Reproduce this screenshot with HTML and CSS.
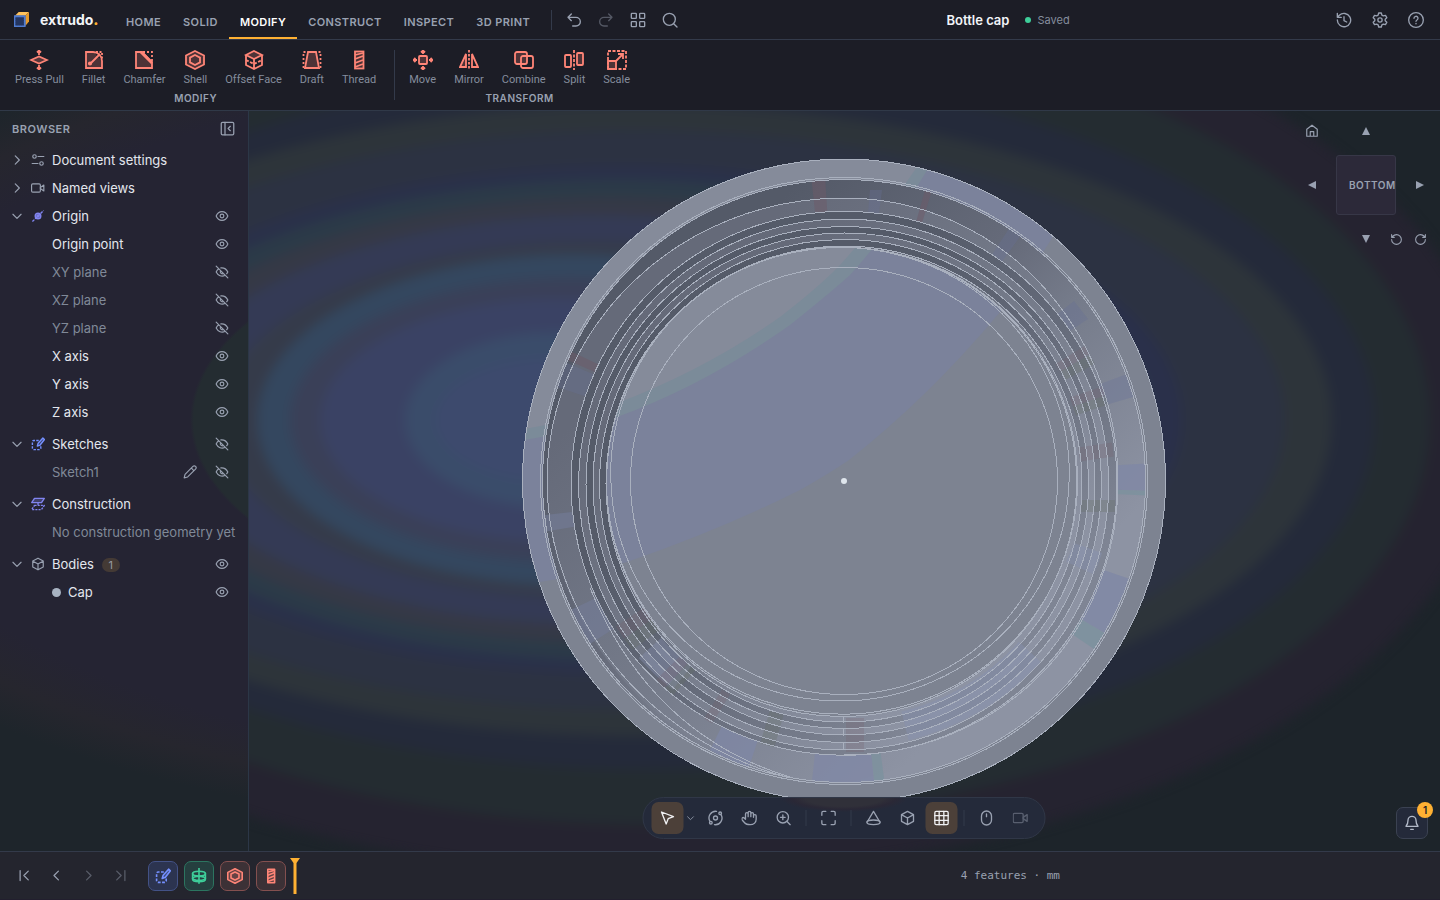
FILE: index.html
```html
<!DOCTYPE html>
<html lang="en">
<head>
<meta charset="utf-8">
<title>Bottle cap – extrudo</title>
<link rel="stylesheet" href="styles.css">
</head>
<body>
<svg class="defs" aria-hidden="true">
  <symbol id="eye" viewBox="0 0 24 24"><path d="M2 12c2-5 6-7.500 10-7.500s8 2.500 10 7.500c-2 5-6 7.500-10 7.500S4 17 2 12z"/><circle cx="12" cy="12" r="3.200"/></symbol>
  <symbol id="eye-off" viewBox="0 0 24 24"><path d="M10 5c5-.6 9.500 2 12 7a14 14 0 0 1-2 3M6.500 6.500A13 13 0 0 0 2 12c3 6 9.500 9 15.500 5.500M9.800 9.800a3.200 3.200 0 0 0 4.500 4.500M2 2l20 20"/></symbol>
  <symbol id="right" viewBox="0 0 24 24"><path d="m9 5 7 7-7 7"/></symbol>
  <symbol id="left" viewBox="0 0 24 24"><path d="m15 5-7 7 7 7"/></symbol>
  <symbol id="down" viewBox="0 0 24 24"><path d="m5 9 7 7 7-7"/></symbol>
  <symbol id="cube" viewBox="0 0 24 24"><path d="M12 2l9 5v10l-9 5-9-5V7zM3.500 7.200 12 12l8.500-4.800M12 12v10"/></symbol>
  <symbol id="video" viewBox="0 0 24 24"><rect x="1" y="5" width="15" height="14" rx="2"/><path d="m16 11 6-4v10l-6-4"/></symbol>
  <symbol id="sketch" viewBox="0 0 20 20"><path stroke-linecap="butt" stroke-dasharray="3.500 1.800" d="M11 5H4a2 2 0 0 0-2 2v9a2 2 0 0 0 2 2h8a2 2 0 0 0 2-2v-3"/><path fill="currentColor" fill-opacity=".25" d="m9 13 1.200-4L17 1.500 19.200 3.500 13 11.500z"/></symbol>
  <symbol id="shell" viewBox="0 0 20 20"><path fill="currentColor" fill-opacity=".22" d="M10 1l9 4.500v9L10 19l-9-4.500v-9z"/><path d="M10 5l5 2.600v4.800L10 15l-5-2.600V7.600z"/></symbol>
  <symbol id="thread" viewBox="0 0 20 20"><rect fill="currentColor" fill-opacity=".2" x="6" y="1.500" width="8.500" height="17"/><path d="m6 5 8-2M6 9l8-3M6 13l8-3M6 17l8-3"/></symbol>
  <symbol id="ccw" viewBox="0 0 24 24"><path d="M3 12a9 9 0 1 0 9-9 10 10 0 0 0-7 3L3 8M3 3v5h5"/></symbol>
  <symbol id="cw" viewBox="0 0 24 24"><path d="M21 12a9 9 0 1 1-9-9 10 10 0 0 1 7 3l2 2M21 3v5h-5"/></symbol>
</svg>
<div class="app">
  <header class="topbar">
    <a class="brand" href="#">
      <svg class="logo" viewBox="0 0 16 16"><path fill="#ffc25c" d="M1 4 5 0h11l-4 4z"/><path fill="#e59a2c" d="M12 4l4-4v10l-4 5z"/><path fill="#24355f" stroke="#4f7bd0" stroke-dasharray="1 1" d="M.5 4.500h11v11H.5z"/></svg>
      <span>extrudo<b>.</b></span>
    </a>
    <nav class="tabs">
      <button>HOME</button><button>SOLID</button><button class="current">MODIFY</button><button>CONSTRUCT</button><button>INSPECT</button><button>3D PRINT</button>
    </nav>
    <div class="quick">
      <button aria-label="Undo"><svg viewBox="0 0 24 24"><path d="M8 13 3 8l5-5M3 8h12a6 6 0 0 1 0 13h-5"/></svg></button>
      <button aria-label="Redo" class="dim"><svg viewBox="0 0 24 24"><path d="m16 13 5-5-5-5M21 8H9a6 6 0 0 0 0 13h5"/></svg></button>
      <button aria-label="Apps"><svg viewBox="0 0 24 24"><rect x="2" y="2" width="7.500" height="7.500" rx="1"/><rect x="14.500" y="2" width="7.500" height="7.500" rx="1"/><rect x="2" y="14.500" width="7.500" height="7.500" rx="1"/><rect x="14.500" y="14.500" width="7.500" height="7.500" rx="1"/></svg></button>
      <button aria-label="Search"><svg viewBox="0 0 24 24"><circle cx="11" cy="11" r="9"/><path d="m17.500 17.500 5 5"/></svg></button>
    </div>
    <div class="doc"><h1>Bottle cap</h1><span class="saved">Saved</span></div>
    <div class="account">
      <button aria-label="History"><svg viewBox="0 0 24 24"><path d="M2 12a10 10 0 1 0 3-7L2 8M2 2v6h6M12 7v6l4 2"/></svg></button>
      <button aria-label="Settings"><svg viewBox="0 0 24 24"><path d="M10 1.500h4l.8 3.200 2.200 1.200 3.200-.9 2 3.500-2.400 2.300v2.400l2.400 2.300-2 3.500-3.200-.9-2.200 1.200-.8 3.200h-4l-.8-3.200L7 18.100l-3.200.9-2-3.500 2.400-2.300v-2.400L1.800 8.500l2-3.500 3.200.9 2.200-1.200z"/><circle cx="12" cy="12" r="3.200"/></svg></button>
      <button aria-label="Help"><svg viewBox="0 0 24 24"><circle cx="12" cy="12" r="11"/><path d="M9 9.500a3 3 0 1 1 4.500 2.500c-1 .6-1.500 1-1.500 2M12 17v.6"/></svg></button>
    </div>
  </header>

  <section class="ribbon">
    <div class="toolset">
      <div class="tools">
        <button><svg viewBox="0 0 20 20"><path fill="currentColor" fill-opacity=".25" d="m2 10 8-3.500 8 3.500-8 3.500z"/><path d="M10 5V1M8 2.500 10 .5l2 2M10 15v4M8 17.500l2 2 2-2"/></svg>Press Pull</button>
        <button><svg viewBox="0 0 20 20"><path fill="currentColor" fill-opacity=".22" stroke="none" d="M2 2h9c1 4 4 7 7 7v9H2z"/><path d="M9 2H2v16h16v-7M6 14 16 4"/><path stroke-dasharray="2 1.500" d="M12 2h6v7"/><path d="M9 2c5 0 9 4 9 9"/><circle cx="6" cy="13.500" r="1.200" fill="currentColor"/></svg>Fillet</button>
        <button><svg viewBox="0 0 20 20"><path fill="currentColor" fill-opacity=".22" d="M8 2H2v16h16v-6z"/><path stroke-width="3" d="m7 2 11 11"/><path stroke-dasharray="2 2" d="M9 2h9v10"/></svg>Chamfer</button>
        <button><svg><use href="#shell"/></svg>Shell</button>
        <button><svg viewBox="0 0 20 20"><path fill="currentColor" fill-opacity=".22" d="m10 1 8 4-8 4-8-4z"/><path d="M2 5v10l8 4 8-4V5M10 9v10"/><path stroke-dasharray="3 1.500" d="m2 10 8 4 8-4"/></svg>Offset Face</button>
        <button><svg viewBox="0 0 20 20"><path fill="currentColor" fill-opacity=".22" d="M6 2h8l3 16H3z"/><path stroke-dasharray="2 2" d="M1.500 18V2h4M18.500 18V2h-4"/></svg>Draft</button>
        <button><svg><use href="#thread"/></svg>Thread</button>
      </div>
      <h2>MODIFY</h2>
    </div>
    <div class="toolset">
      <div class="tools">
        <button><svg viewBox="0 0 20 20"><rect x="6" y="6" width="8" height="8" rx="1" fill="currentColor" fill-opacity=".22"/><path d="M10 4V1M8 2.500 10 .5l2 2M10 16v3M8 17.500l2 2 2-2M4 10H1M2.500 8l-2 2 2 2M16 10h3M17.500 8l2 2-2 2"/></svg>Move</button>
        <button><svg viewBox="0 0 20 20"><path fill="currentColor" fill-opacity=".22" d="M7 4v13H1z"/><path d="M13 4v13h6z"/><path stroke-dasharray="2.500 1.500" d="M10 0v20"/></svg>Mirror</button>
        <button><svg viewBox="0 0 20 20"><rect x="1" y="2" width="12" height="12" rx="2" fill="currentColor" fill-opacity=".22"/><rect x="7" y="6" width="12" height="12" rx="2"/></svg>Combine</button>
        <button><svg viewBox="0 0 20 20"><rect x="1" y="5" width="6" height="12" rx="1"/><rect x="13" y="3" width="6" height="12" rx="1" fill="currentColor" fill-opacity=".22"/><path stroke-dasharray="3 1.500" d="M10 0v20"/></svg>Split</button>
        <button><svg viewBox="0 0 20 20"><rect x="1" y="1" width="18" height="18" stroke-dasharray="3 1.500"/><path fill="currentColor" fill-opacity=".22" d="M1 11h8v8H1z"/><path d="m9 11 7-7M11 4h5v5"/></svg>Scale</button>
      </div>
      <h2>TRANSFORM</h2>
    </div>
  </section>

  <main class="stage">
    <svg class="scene" viewBox="0 111 1440 740" preserveAspectRatio="xMidYMid slice">
      <defs>
        <filter id="soft" x="-10%" y="-10%" width="120%" height="120%" color-interpolation-filters="sRGB"><feGaussianBlur stdDeviation="6"/></filter>
        <linearGradient id="dark" x1=".15" y1=".15" x2=".8" y2=".8"><stop offset=".3" stop-color="#555b69"/><stop offset=".6" stop-color="#646a79"/><stop offset="1" stop-color="#7f8594"/></linearGradient>
        <linearGradient id="light" x1=".15" y1=".15" x2=".8" y2=".8"><stop offset=".1" stop-color="#656a79"/><stop offset=".55" stop-color="#757b8a"/><stop offset="1" stop-color="#8d93a3"/></linearGradient>
        <linearGradient id="wall" x1=".15" y1=".15" x2=".8" y2=".8"><stop offset=".1" stop-color="#545a68"/><stop offset=".45" stop-color="#666b7a"/><stop offset=".6" stop-color="#757b8a"/><stop offset=".95" stop-color="#8d93a3"/></linearGradient>
        <clipPath id="rimClip"><circle cx="844" cy="480.500" r="321.500"/></clipPath>
        <clipPath id="wallClip"><circle cx="844" cy="481" r="302"/></clipPath>
        <clipPath id="floorClip"><ellipse cx="841.600" cy="482" rx="235" ry="234.500"/></clipPath>
        <g id="sheen">
          <rect x="500" y="150" width="700" height="670" fill="#7d8391"/>
          <path fill="#7b829b" d="M500 140V588Q535 583 570 577 600 570 627 562 720 530 800 490 830 473 849 460 930 396 1000 312 1030 275 1060 225L1100 140z"/>
          <path fill="#7b8b99" d="M500 140V443Q570 435 617 417 705 385 790 325 830 293 850 275 900 220 945 140z"/>
          <path fill="#858b9a" d="M500 140V433Q565 424 615 404 705 370 780 317 820 286 840 265 890 210 935 140z"/>
        </g>
      </defs>
      <rect y="60" width="1440" height="840" fill="#1d242a"/>
      <g filter="url(#soft)">
        <ellipse cx="660" cy="420" rx="835" ry="455" fill="#252330"/>
        <ellipse cx="660" cy="420" rx="770" ry="405" fill="#242c31"/>
        <ellipse cx="655" cy="420" rx="720" ry="350" fill="#242a3a"/>
        <ellipse cx="640" cy="420" rx="692" ry="316" fill="#2d343a"/>
        <ellipse cx="635" cy="420" rx="650" ry="290" fill="#2c3242"/>
        <ellipse cx="622" cy="420" rx="560" ry="254" fill="#2a304a"/>
        <ellipse cx="620" cy="420" rx="532" ry="241" fill="#2b3a48"/>
        <ellipse cx="610" cy="420" rx="490" ry="223" fill="#353946"/>
        <ellipse cx="600" cy="420" rx="440" ry="205" fill="#343a55"/>
        <ellipse cx="590" cy="420" rx="370" ry="178" fill="#353b4a"/>
        <ellipse cx="575" cy="420" rx="318" ry="166" fill="#34475f"/>
        <ellipse cx="570" cy="420" rx="280" ry="142" fill="#3a4058"/>
        <ellipse cx="560" cy="420" rx="240" ry="122" fill="#3a4264"/>
        <ellipse cx="555" cy="420" rx="150" ry="88" fill="#3a4c6a"/>
        <ellipse cx="550" cy="420" rx="115" ry="62" fill="#3d4a6d"/>
      </g>
      <g clip-path="url(#rimClip)"><use href="#sheen"/></g>
      <g clip-path="url(#wallClip)">
        <circle cx="844" cy="481" r="302" fill="url(#wall)"/>
        <path fill="url(#light)" d="M547 481C547 325 680 198 844 198c155 0 274 130 274 283 0 160-124 274-274 302C680 783 547 640 547 481z"/>
        <path fill="#7f87a5" fill-opacity=".75" d="M844 481 810 800h66zM844 481l310-18v28zM844 481l286 98-22 56zM844 481 710 750l38 20z"/>
        <path fill="#737b98" fill-opacity=".6" d="M844 481 520 518v18zM844 481 560 615l22 34zM844 481l296-112v26z"/>
        <path fill="#7b929e" fill-opacity=".75" d="M844 481 876 800h11zM844 481l310 10v5zM844 481l264 154-8 18z"/>
        <path fill="#687094" fill-opacity=".35" d="M844 481 560 360l-6 26zM844 481l230-180 14 18zM844 481l170-260 10 10zM844 481 870 190h12z"/>
        <path fill="#6e5a68" fill-opacity=".5" d="M844 481 811 175h14zM844 481 925 190h7zM844 481 568 350l-3 9z"/>
      </g>
      <g>
        <ellipse cx="844" cy="483.300" rx="273" ry="272" fill="url(#dark)"/>
        <ellipse cx="843.700" cy="484.500" rx="265" ry="265.500" fill="url(#light)"/>
        <ellipse cx="843.700" cy="484.500" rx="257.700" ry="258" fill="url(#dark)"/>
        <ellipse cx="844" cy="484" rx="251" ry="251" fill="url(#light)"/>
        <ellipse cx="844" cy="484" rx="244.500" ry="244.500" fill="url(#dark)"/>
        <ellipse cx="844" cy="484" rx="238" ry="238" fill="url(#light)"/>
      </g>
      <path fill="none" stroke="#8791b2" stroke-opacity=".4" stroke-width="30" d="M905 726A252 252 0 0 0 1030 652M1080 568a252 252 0 0 0 8-20M650 648a252 252 0 0 0 32 30"/>
      <path fill="none" stroke="#77616d" stroke-opacity=".25" stroke-width="34" d="M630 617l8 12M668 668l8 8M713 704l8 5M1070 355l5 8M1086 392l3 9M1095 445l2 14M846 735h18"/>
      <path fill="none" stroke="#687266" stroke-opacity=".3" stroke-width="34" d="M638 629l8 11M676 676l8 7M765 727l14 4M1075 363l5 9M1089 401l3 9M1098 500v12"/>
      <g clip-path="url(#floorClip)"><use href="#sheen"/></g>
      <g class="edges">
        <circle cx="844" cy="480.500" r="321.500"/>
        <circle cx="844" cy="481" r="303.500"/>
        <circle cx="844" cy="481" r="301.500"/>
        <path d="M547 481C547 325 680 198 844 198c155 0 274 130 274 283 0 160-124 274-274 274M547 481c0 130 95 258 243 297M590 588c35 84 95 157 200 189"/>
        <ellipse cx="844" cy="483.300" rx="273" ry="272"/>
        <ellipse cx="843.700" cy="484.500" rx="265" ry="265.500"/>
        <ellipse cx="843.700" cy="484.500" rx="257.700" ry="258"/>
        <ellipse cx="844" cy="484" rx="251" ry="251"/>
        <ellipse cx="844" cy="484" rx="244.500" ry="244.500"/>
        <ellipse cx="844" cy="484" rx="238" ry="238"/>
        <ellipse cx="841.600" cy="482" rx="235" ry="234.500"/>
        <ellipse cx="842" cy="480.700" rx="235.500" ry="233.500"/>
        <ellipse cx="840" cy="474.200" rx="229.300" ry="226.800"/>
        <circle cx="844" cy="481" r="213.500"/>
        <path d="M843.500 717v6M843.500 729v7M843.500 743v7"/>
      </g>
      <circle cx="844" cy="481" r="3" fill="#dfe5ec"/>
    </svg>

    <aside class="browser">
      <header><h2>BROWSER</h2><button aria-label="Collapse panel"><svg viewBox="0 0 24 24"><rect x="2" y="2" width="20" height="20" rx="2"/><path d="M8 2v20M16.500 8.500 13 12l3.500 3.500"/></svg></button></header>
      <ul>
        <li><button aria-label="Expand"><svg><use href="#right"/></svg></button><svg viewBox="0 0 24 24"><circle cx="6" cy="6" r="3"/><circle cx="18" cy="18" r="3"/><path d="M12 6h10M2 18h10"/></svg><span>Document settings</span></li>
        <li><button aria-label="Expand"><svg><use href="#right"/></svg></button><svg><use href="#video"/></svg><span>Named views</span></li>
        <li><button aria-label="Collapse"><svg><use href="#down"/></svg></button><svg class="violet" viewBox="0 0 20 20"><path stroke-linecap="butt" stroke-dasharray="4 1.500" d="M2 18 18 2"/><circle cx="10" cy="10" r="4" fill="currentColor" fill-opacity=".5"/><circle cx="10" cy="10" r="1.500" fill="currentColor"/></svg><span>Origin</span><button aria-label="Hide"><svg><use href="#eye"/></svg></button></li>
        <li class="child"><span>Origin point</span><button aria-label="Hide"><svg><use href="#eye"/></svg></button></li>
        <li class="child off"><span>XY plane</span><button aria-label="Show"><svg><use href="#eye-off"/></svg></button></li>
        <li class="child off"><span>XZ plane</span><button aria-label="Show"><svg><use href="#eye-off"/></svg></button></li>
        <li class="child off"><span>YZ plane</span><button aria-label="Show"><svg><use href="#eye-off"/></svg></button></li>
        <li class="child"><span>X axis</span><button aria-label="Hide"><svg><use href="#eye"/></svg></button></li>
        <li class="child"><span>Y axis</span><button aria-label="Hide"><svg><use href="#eye"/></svg></button></li>
        <li class="child"><span>Z axis</span><button aria-label="Hide"><svg><use href="#eye"/></svg></button></li>
      </ul>
      <ul>
        <li><button aria-label="Collapse"><svg><use href="#down"/></svg></button><svg class="blue"><use href="#sketch"/></svg><span>Sketches</span><button aria-label="Show"><svg><use href="#eye-off"/></svg></button></li>
        <li class="child off"><span>Sketch1</span><button aria-label="Edit"><svg viewBox="0 0 24 24"><path d="M2 22l1.500-6L17 2.500a2.800 2.800 0 0 1 4.500 4.500L8 20.500zM14.500 5.500l4 4"/></svg></button><button aria-label="Show"><svg><use href="#eye-off"/></svg></button></li>
      </ul>
      <ul>
        <li><button aria-label="Collapse"><svg><use href="#down"/></svg></button><svg class="violet" viewBox="0 0 20 20"><path fill="currentColor" fill-opacity=".3" d="M5 2h14l-4 6H1z"/><path stroke-linecap="butt" stroke-dasharray="3 1.500" d="M5 12h14l-4 6H1zM10 8v4"/></svg><span>Construction</span></li>
        <li class="child off"><span>No construction geometry yet</span></li>
      </ul>
      <ul>
        <li><button aria-label="Collapse"><svg><use href="#down"/></svg></button><svg><use href="#cube"/></svg><span>Bodies <em>1</em></span><button aria-label="Hide"><svg><use href="#eye"/></svg></button></li>
        <li class="child"><i class="dot"></i><span>Cap</span><button aria-label="Hide"><svg><use href="#eye"/></svg></button></li>
      </ul>
    </aside>

    <div class="viewcube">
      <button aria-label="Home view"><svg viewBox="0 0 24 24"><path d="M3 9l9-7 9 7v12H3zM9 21v-8h6v8"/></svg></button>
      <button aria-label="Rotate up"><svg class="tri" viewBox="0 0 8 8"><path d="M4 0l4 8H0z"/></svg></button><span></span>
      <button aria-label="Rotate left"><svg class="tri" viewBox="0 0 8 8"><path d="M0 4l8-4v8z"/></svg></button>
      <button class="face">BOTTOM</button>
      <button aria-label="Rotate right"><svg class="tri" viewBox="0 0 8 8"><path d="M8 4 0 0v8z"/></svg></button>
      <span></span>
      <button aria-label="Rotate down"><svg class="tri" viewBox="0 0 8 8"><path d="M4 8 0 0h8z"/></svg></button>
      <div class="spin"><button aria-label="Roll left"><svg><use href="#ccw"/></svg></button><button aria-label="Roll right"><svg><use href="#cw"/></svg></button></div>
    </div>

    <div class="navbar">
      <button class="on" aria-label="Select"><svg viewBox="0 0 24 24"><path d="m3 3 7 18 3-8 8-3z"/></svg></button>
      <button class="more" aria-label="Selection options"><svg><use href="#down"/></svg></button>
      <button aria-label="Orbit"><svg viewBox="0 0 24 24"><circle cx="12" cy="12" r="3"/><circle cx="19" cy="5" r="2"/><circle cx="5" cy="19" r="2"/><path d="M10.500 22A10 10 0 0 0 20 6.500M13.500 2A10 10 0 0 0 4 17.500"/></svg></button>
      <button aria-label="Pan"><svg viewBox="0 0 24 24"><path d="M18 11V6a2 2 0 0 0-4 0v4V4a2 2 0 0 0-4 0v6-4a2 2 0 0 0-4 0v8l-2-2a2 2 0 0 0-3 3l4 4.500C7 22 10 22 13 22c5 0 9-3 9-8V9a2 2 0 0 0-4 0z"/></svg></button>
      <button aria-label="Zoom"><svg viewBox="0 0 24 24"><circle cx="11" cy="11" r="8.500"/><path d="m17 17 5 5M11 7.500v7M7.500 11h7"/></svg></button>
      <hr>
      <button aria-label="Fit"><svg viewBox="0 0 24 24"><path d="M2 8V4q0-2 2-2h4M16 2h4q2 0 2 2v4M22 16v4q0 2-2 2h-4M8 22H4q-2 0-2-2v-4"/></svg></button>
      <hr>
      <button aria-label="Perspective"><svg viewBox="0 0 24 24"><path d="M2.500 18 12 2l9.500 16"/><ellipse cx="12" cy="18.500" rx="10" ry="3.500"/></svg></button>
      <button aria-label="Display style"><svg><use href="#cube"/></svg></button>
      <button class="on" aria-label="Grid"><svg viewBox="0 0 24 24"><rect x="2" y="2" width="20" height="20" rx="2"/><path d="M8.500 2v20M15.500 2v20M2 8.500h20M2 15.500h20"/></svg></button>
      <hr>
      <button aria-label="Mouse settings"><svg viewBox="0 0 24 24"><rect x="4.500" y="1.500" width="15" height="21" rx="7.500"/><path d="M12 6v4"/></svg></button>
      <button class="dim" aria-label="Record"><svg><use href="#video"/></svg></button>
    </div>

    <button class="bell" aria-label="Notifications"><svg viewBox="0 0 24 24"><path d="M3 17c2-2 3-3 3-9a6 6 0 0 1 12 0c0 6 1 7 3 9zM10 21.500h4"/></svg><span>1</span></button>
  </main>

  <footer class="timeline">
    <div class="playback">
      <button aria-label="First"><svg viewBox="0 0 24 24"><path d="M5 4v16M18 5l-7 7 7 7"/></svg></button>
      <button aria-label="Previous"><svg><use href="#left"/></svg></button>
      <button aria-label="Next" class="dim"><svg><use href="#right"/></svg></button>
      <button aria-label="Last" class="dim"><svg viewBox="0 0 24 24"><path d="M19 4v16M6 5l7 7-7 7"/></svg></button>
    </div>
    <div class="features">
      <button class="blue" aria-label="Sketch"><svg><use href="#sketch"/></svg></button>
      <button class="green" aria-label="Revolve"><svg viewBox="0 0 20 20"><ellipse cx="10" cy="7" rx="8" ry="3"/><path d="M2 7v7c0 4 16 4 16 0V7M10 0v19"/><ellipse cx="10" cy="13" rx="8" ry="2.500" stroke-dasharray="3 1"/></svg></button>
      <button class="coral" aria-label="Shell"><svg><use href="#shell"/></svg></button>
      <button class="coral" aria-label="Thread"><svg><use href="#thread"/></svg></button>
      <svg class="marker" viewBox="0 0 10 36"><path d="M0 0h10L6.500 5v31h-3V5z"/></svg>
    </div>
    <p>4 features · mm</p>
  </footer>
</div>
</body>
</html>
```

FILE: styles.css
```css
* { box-sizing: border-box; }
body { margin: 0; background: #1b1c25; color: #e3e7ee; font: 13px/20px Inter, "Liberation Sans", sans-serif; }
h1, h2, p, ul { margin: 0; padding: 0; }
button { display: flex; align-items: center; justify-content: center; margin: 0; padding: 0; border: 0; background: none; color: inherit; font: inherit; }
svg { display: block; flex: none; fill: none; stroke: currentColor; stroke-width: 2; stroke-linecap: round; stroke-linejoin: round; }
.defs { position: absolute; width: 0; height: 0; }
.dim { opacity: .45; }
.blue { color: #7590ff; }
.violet { color: #8184f0; }
.green { color: #3ecf9a; }
.coral { color: #ff8577; }

.app { display: flex; flex-direction: column; min-height: 100vh; }

.topbar { display: flex; height: 40px; border-bottom: 1px solid #333a4a; color: #99a1b1; background: #1c1d26; }
.brand { display: flex; align-items: center; gap: 11px; width: 115px; padding-left: 14px; color: #f2f4f8; font-size: 14px; font-weight: 700; text-decoration: none; }
.brand b { color: #ffb133; }
.logo { width: 15px; height: 15px; stroke: none; }
.tabs { display: flex; }
.tabs button { padding: 6px 11px 0; font-size: 11px; font-weight: 600; letter-spacing: .4px; border-bottom: 2px solid transparent; }
.tabs button.current { color: #fff; border-bottom-color: #ffb133; }
.quick { display: flex; align-items: center; margin-left: 10px; }
.quick::before { content: ""; height: 20px; border-left: 1px solid #333a4a; margin-right: 6px; }
.quick button { width: 32px; height: 32px; }
.quick svg, .account svg { width: 16px; height: 16px; }
.doc { flex: 1; display: flex; align-items: center; justify-content: center; gap: 16px; }
.doc h1 { color: #f2f4f8; font-size: 13px; font-weight: 600; }
.saved { display: flex; align-items: center; gap: 6px; font-size: 11px; color: #858d9d; }
.saved::before { content: ""; width: 6px; height: 6px; border-radius: 50%; background: #3ecf9a; }
.account { display: flex; align-items: center; gap: 8px; padding-right: 10px; }
.account button { width: 28px; height: 28px; }

.ribbon { display: flex; height: 71px; padding: 10px 6px 0; border-bottom: 1px solid #303948; background: #1c1d26; }
.toolset + .toolset { margin-left: 9px; padding-left: 5px; border-left: 1px solid #333a4a; }
.toolset { height: 50px; }
.tools { display: flex; }
.tools button { flex-direction: column; padding: 0 9px; font-size: 11px; line-height: 20px; color: #858d9d; font-family: Roboto, sans-serif; }
.tools svg { width: 20px; height: 20px; color: #ff8577; stroke-linecap: butt; stroke-linejoin: miter; stroke-width: 1.8; }
.toolset h2 { text-align: center; font-size: 10px; line-height: 16px; font-weight: 600; letter-spacing: .5px; color: #99a1b1; }

.stage { position: relative; flex: 1; display: flex; min-height: 500px; overflow: hidden; }
.scene { position: absolute; inset: 0; width: 100%; height: 100%; stroke: none; stroke-linecap: butt; }
.edges { stroke: #a9b0be; stroke-width: 1; shape-rendering: crispEdges; }

.browser { position: relative; width: 249px; border-right: 1px solid #2c3747;
  background:
    radial-gradient(ellipse 368px 185px at 558px 309px, #242c31 99%, transparent 100%),
    radial-gradient(ellipse 900px 412px at 600px 309px, #252433 83%, #26262e 92%, #1e252b 100%); }
.browser header { display: flex; align-items: center; justify-content: space-between; height: 35px; padding: 0 13px 0 12px; color: #99a1b1; }
.browser h2 { font-size: 11px; font-weight: 600; letter-spacing: .5px; }
.browser header svg { width: 15px; height: 15px; stroke-width: 2; }
.browser ul { list-style: none; margin-bottom: 4px; }
.browser li { display: flex; align-items: center; gap: 7px; height: 28px; padding: 0 19px 0 10px; color: #99a1b1; }
.browser li svg { width: 14px; height: 14px; }
.browser li svg.violet { color: #8184f0; }
.browser li svg.blue { color: #7590ff; }
.browser li span { flex: 1; color: #e3e7ee; white-space: nowrap; }
.browser li.child { padding-left: 52px; }
.browser li.child button + button { margin-left: 11px; }
.browser li.off span { color: #808998; }
.browser em { display: inline-block; margin-left: 4px; padding: 0 7px; border-radius: 8px; background: #443a35; color: #969aa4; font-size: 11px; line-height: 14px; font-style: normal; }
.dot { width: 9px; height: 9px; border-radius: 50%; background: #a8b3c2; }

.viewcube { position: absolute; top: 8px; right: 8px; display: grid; grid-template: 24px 60px 24px / 24px 60px 24px; gap: 12px; color: #99a1b1; }
.viewcube svg { width: 14px; height: 14px; }
.viewcube .tri { width: 8px; height: 8px; fill: currentColor; stroke: none; }
.viewcube .face { justify-content: flex-start; padding-left: 12px; overflow: hidden; border: 1px solid #373747; border-radius: 3px; background: #2c2939; font-size: 10px; font-weight: 600; letter-spacing: .5px; }
.spin { display: flex; justify-self: end; }
.spin button { width: 24px; }
.viewcube .spin svg { width: 13px; height: 13px; }

.navbar { position: absolute; left: calc(50% + 124px); bottom: 12px; transform: translateX(-50%); display: flex; align-items: center; gap: 2px; padding: 4px 8px; border: 1px solid #303747; border-radius: 21px; color: #99a1b1;
  background: radial-gradient(ellipse 64px 14px at 50% 0, #303039 60%, #2a2836 80%, transparent) #242a3a; }
.navbar button { width: 32px; height: 32px; border-radius: 7px; }
.navbar svg { width: 16px; height: 16px; }
.navbar .on { background: #4c4039; color: #f0f0f2; }
.navbar .more { width: 12px; justify-content: flex-start; }
.navbar .more svg { width: 10px; height: 10px; }
.navbar hr { width: 1px; height: 16px; margin: 0 4px; border: 0; background: #333a4a; }
.bell { position: absolute; right: 12px; bottom: 12px; width: 32px; height: 32px; border: 1px solid #3b4252; border-radius: 7px; background: #242a3a; color: #b3bac8; }
.bell svg { width: 16px; height: 16px; }
.bell span { position: absolute; top: -6px; right: -6px; width: 16px; height: 16px; border-radius: 50%; background: #ffb133; color: #1c1d26; font-size: 10px; line-height: 16px; font-weight: 600; }

.timeline { display: flex; align-items: center; height: 49px; padding-left: 8px; border-top: 1px solid #333a4a; border-bottom: 1px solid #221f2e; background: #24252e; color: #99a1b1; }
.playback, .features { display: flex; }
.playback button { width: 32px; height: 32px; }
.playback svg { width: 15px; height: 15px; }
.features { gap: 6px; margin-left: 12px; align-items: center; }
.features button { width: 30px; height: 30px; border: 1px solid; border-radius: 7px; }
.features button svg { width: 16px; height: 16px; }
.features .blue { border-color: #435286; background: #2c3450; }
.features .green { border-color: #2c7560; background: #253f3f; }
.features .coral { border-color: #84504f; background: #3c3136; }
.marker { width: 10px; height: 36px; margin-left: -2px; fill: #ffb133; stroke: none; }
.timeline p { margin-left: auto; margin-right: 380px; font: 11px/16px "DejaVu Sans Mono", monospace; }
```
